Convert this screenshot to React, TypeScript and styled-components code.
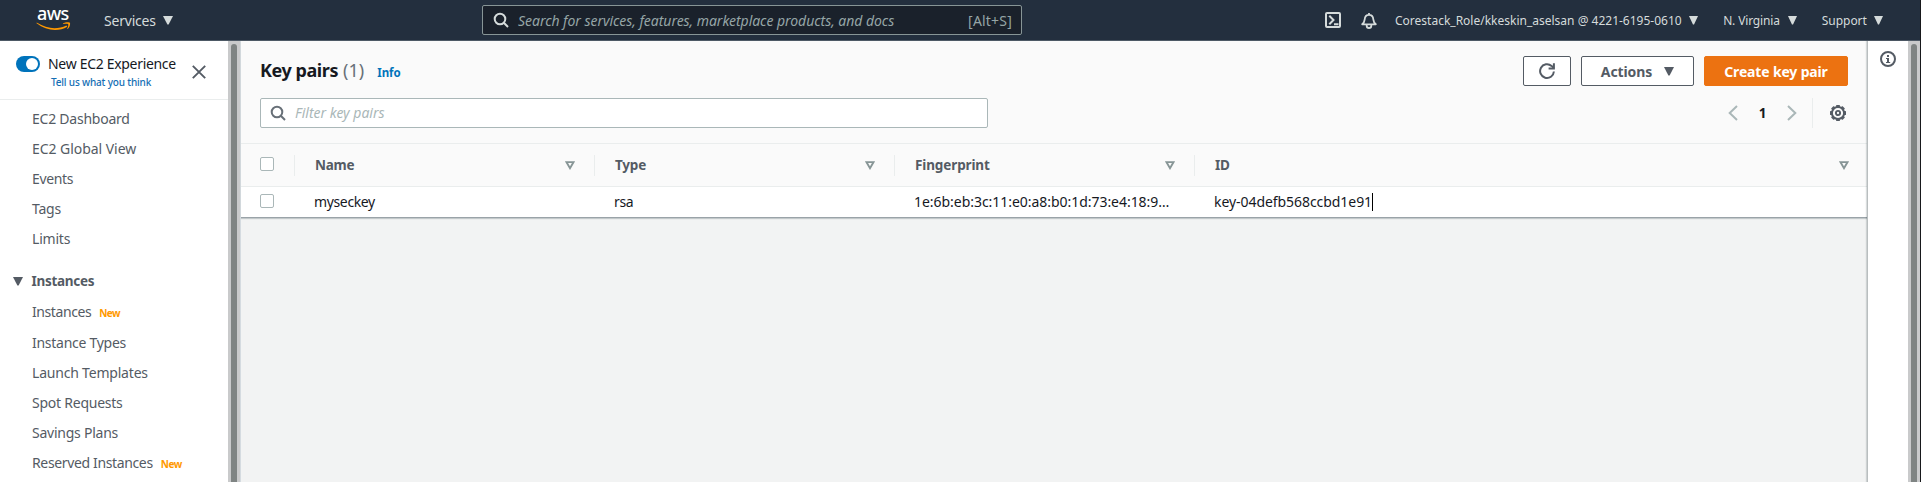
import React from "react";
import styled, { createGlobalStyle } from "styled-components";

const GlobalStyle = createGlobalStyle`
  *, *::before, *::after { box-sizing: border-box; }
  html, body, #root { height: 100%; }
  body {
    margin: 0;
    overflow: hidden;
    background: #f2f3f3;
    font-family: "Noto Sans", "Open Sans", sans-serif;
    font-size: 14px;
    color: #16191f;
  }
`;

const Page = styled.div`
  display: grid;
  grid-template-rows: 41px 1fr;
  height: 482px;
  border-right: 1px solid #17181b;
`;

const Text = styled.span<{ $ls?: number }>`
  letter-spacing: ${(p) => p.$ls ?? 0}px;
  white-space: nowrap;
`;

/* ---------- top navigation ---------- */

const TopBar = styled.header`
  display: flex;
  align-items: center;
  height: 41px;
  background: #232f3e;
  border-bottom: 1px solid #4d5965;
  color: #d5dbdb;
`;

const Logo = styled.div`
  display: flex;
  flex-direction: column;
  width: 36px;
  height: 23px;
  margin: 0 32px 1px 36px;
  color: #fff;
  font-size: 18px;
  font-weight: 500;
  letter-spacing: -0.6px;
`;

const LogoWord = styled.span`
  height: 14px;
  padding-left: 1px;
  line-height: 10px;
`;

const ServicesMenu = styled.div`
  display: flex;
  align-items: center;
  gap: 7px;
  width: 378px;
`;

const GlobalSearch = styled.div`
  display: flex;
  align-items: center;
  width: 540px;
  height: 30px;
  padding: 0 9px 0 10px;
  background: #1a212b;
  border: 1px solid #879596;
  border-radius: 2px;
  color: #95a5a6;
`;

const SearchHint = styled(Text)`
  flex: 1;
  margin-left: 9px;
  font-style: italic;
`;

const AccountMenus = styled.div`
  display: flex;
  align-items: center;
  margin-left: 303px;
  font-size: 12px;
`;

const AccountMenu = styled.div<{ $left: number; $gap?: number }>`
  display: flex;
  align-items: center;
  gap: ${(p) => p.$gap ?? 7}px;
  margin-left: ${(p) => p.$left}px;
  padding-top: 1px;
`;

/* ---------- body layout ---------- */

const Body = styled.div`
  display: grid;
  grid-template-columns: 228px 13px 1fr 41px 12px;
  min-height: 0;
`;

const ScrollTrack = styled.div<{ $edge?: boolean }>`
  padding: 3px 3px 0;
  background: #c9cacb;
  border-right: ${(p) => (p.$edge ? "1px solid #d5dbe0" : "none")};
`;

const ScrollThumb = styled.div`
  width: 6px;
  height: 100%;
  background: #7f8483;
  border-radius: 3px 3px 0 0;
`;

/* ---------- sidebar ---------- */

const Sidebar = styled.nav`
  display: flex;
  flex-direction: column;
  background: #fff;
  color: #545b64;
  overflow: hidden;
`;

const Experience = styled.div`
  display: flex;
  align-items: flex-start;
  height: 59px;
  flex: none;
  padding: 15px 0 0 16px;
  border-bottom: 1px solid #eaeded;
`;

const Toggle = styled.div`
  display: flex;
  justify-content: flex-end;
  width: 24px;
  height: 16px;
  padding: 2px;
  background: #0073bb;
  border-radius: 8px;
`;

const ToggleKnob = styled.div`
  width: 12px;
  height: 12px;
  background: #fff;
  border-radius: 50%;
`;

const ExperienceText = styled.div`
  display: flex;
  flex-direction: column;
  width: 145px;
  padding-left: 8px;
  color: #16191f;
  line-height: 16px;
`;

const FeedbackLink = styled(Text)`
  padding: 2px 0 0 3px;
  color: #146eb4;
  font-size: 10px;
  font-weight: 500;
`;

const CloseIcon = styled.svg`
  margin: 9px 0 0 7px;
`;

const NavList = styled.div`
  padding-top: 4px;
`;

const NavItem = styled.div<{ $tall?: boolean }>`
  display: flex;
  align-items: center;
  height: ${(p) => (p.$tall ? 31 : 30)}px;
  padding: 0 0 2px 32px;
`;

const NavHeading = styled.div`
  display: flex;
  align-items: center;
  gap: 8.500px;
  height: 30px;
  margin: 12px 0 1px;
  padding-left: 13px;
  font-size: 13.5px;
  font-weight: 700;
`;

const NewTag = styled.span`
  margin: 3px 0 0 8px;
  color: #ff9900;
  font-size: 10px;
  font-weight: 700;
  letter-spacing: -0.5px;
`;

/* ---------- key pair panel ---------- */

const Main = styled.main`
  min-width: 0;
  background: #f2f3f3;
`;

const Panel = styled.section`
  background: #fafafa;
  border-bottom: 1px solid #9aa3a8;
  box-shadow: 0 1px 1px 0 #c3c9cb;
`;

const PanelTop = styled.div`
  display: flex;
  align-items: center;
  justify-content: space-between;
  height: 45px;
  padding: 15px 19px 0;
`;

const Title = styled.h1`
  display: flex;
  align-items: baseline;
  margin: 0;
  font-size: 18px;
  line-height: 20px;
`;

const Count = styled(Text)`
  margin-left: 5px;
  color: #687078;
  font-weight: 400;
`;

const InfoLink = styled(Text)`
  margin-left: 13px;
  color: #0073bb;
  font-size: 11.5px;
`;

const ButtonRow = styled.div`
  display: flex;
  gap: 10px;
`;

const Button = styled.button<{ $width: number; $primary?: boolean }>`
  display: flex;
  align-items: center;
  justify-content: center;
  gap: 12px;
  width: ${(p) => p.$width}px;
  height: 30px;
  padding: 0;
  background: ${(p) => (p.$primary ? "#ec7211" : "#fff")};
  border: 1px solid ${(p) => (p.$primary ? "#ec7211" : "#545b64")};
  border-radius: 2px;
  color: ${(p) => (p.$primary ? "#fff" : "#545b64")};
  font: 700 14px "Noto Sans", sans-serif;
`;

const PanelFilter = styled.div`
  display: flex;
  align-items: center;
  justify-content: space-between;
  height: 58px;
  padding: 12px 21px 15px 19px;
  border-bottom: 1px solid #eaeded;
`;

const FilterBox = styled.div`
  display: flex;
  align-items: center;
  gap: 9px;
  width: 728px;
  height: 30px;
  padding: 0 0 1px 9px;
  background: #fff;
  border: 1px solid #aab7b8;
  border-radius: 2px;
  color: #aab7b8;
  font-style: italic;
`;

const Pager = styled.div`
  display: flex;
  align-items: center;
  height: 30px;
`;

const PageNumber = styled.span`
  width: 49px;
  text-align: center;
  font-weight: 700;
  font-size: 13.5px;
`;

const PagerDivider = styled.div`
  width: 1px;
  height: 30px;
  margin: 0 17px 0 15px;
  background: #eaeded;
`;

const Row = styled.div<{ $head?: boolean }>`
  display: grid;
  grid-template-columns: 53px 300px 300px 300px 1fr;
  align-items: center;
  height: ${(p) => (p.$head ? 43 : 30)}px;
  background: ${(p) => (p.$head ? "#fafafa" : "#fff")};
  border-bottom: ${(p) => (p.$head ? "1px solid #eaeded" : "none")};
`;

const CheckCell = styled.div`
  padding: 0 0 2px 19px;
`;

const Checkbox = styled.div`
  width: 14px;
  height: 14px;
  background: #fff;
  border: 1px solid #aab7b8;
  border-radius: 2px;
`;

const HeadCell = styled.div`
  display: flex;
  align-items: center;
  justify-content: space-between;
  height: 21px;
  padding: 0 19px 0 20px;
  border-left: 1px solid #eaeded;
  color: #545b64;
  font-size: 13.5px;
  font-weight: 700;

  &:last-child {
    padding-right: 18px;
  }
`;

const Cell = styled.div`
  display: flex;
  align-items: center;
  padding: 0 0 2px 20px;
`;

const Caret = styled.span`
  width: 1px;
  height: 18px;
  margin-top: 2px;
  background: #000;
`;

const HelpRail = styled.aside`
  display: flex;
  justify-content: center;
  padding-top: 10px;
  background: #fff;
  border-left: 1px solid #b9bebf;
  box-shadow: -1px 0 1px rgba(0, 28, 36, 0.15);
`;

/* ---------- icons ---------- */

const Triangle = ({ w, h = 9 }: { w: number; h?: number }) => (
  <svg width={w} height={h} viewBox="0 0 10 9" preserveAspectRatio="none">
    <path d="M0 0h10L5.6 8.6h-1.2z" fill="currentColor" />
  </svg>
);

const SortIcon = () => (
  <svg width="10" height="9" viewBox="0 0 10 9">
    <path d="M1.4 1.100h7.200L5 7.200z" fill="none" stroke="#879596" strokeWidth="1.900" />
  </svg>
);

const SearchIcon = ({ color }: { color: string }) => (
  <svg width="16" height="16" viewBox="0 0 16 16" fill="none" stroke={color} strokeWidth="2">
    <circle cx="7" cy="7" r="5.300" />
    <path d="M10.800 10.800l4.200 4.200" />
  </svg>
);

const Smile = () => (
  <svg width="35" height="9" viewBox="0 0 35 9">
    <path d="M.6 1.300C10.500 9 22.500 9.800 31.300 4.700l-.9-1.200C21.500 7.600 11 7.100 1.100.8c-.6-.3-.9.1-.5.5z" fill="#ff9900" />
    <path d="M27 1.400C29 0 33.300-.1 33.900.7c.6.8-.1 4.400-2.100 6.200-.4.3-.7.1-.5-.3.6-1.300 1.300-3.700.9-4.400-.5-.6-3-.4-4.700-.2-.6.1-.8-.3-.5-.6z" fill="#ff9900" />
  </svg>
);

const ShellIcon = () => (
  <svg width="16" height="16" viewBox="0 0 16 16" fill="none" stroke="#d5dbdb" strokeWidth="2">
    <rect x="1" y="1" width="14" height="14" rx="1" />
    <path d="M4.300 3.700L8.500 8l-4.200 4.300M9 12.200h4.500" />
  </svg>
);

const BellIcon = () => (
  <svg width="16" height="16" viewBox="0 0 16 16" fill="none" stroke="#d5dbdb" strokeWidth="1.800" strokeLinejoin="round">
    <path d="M8 0v2M1.200 11.300c2-1.600 2.300-3.200 2.500-5 .2-2.600 1.800-4.400 4.300-4.400s4.100 1.800 4.300 4.400c.2 1.800.5 3.400 2.500 5z" />
    <path d="M5.700 11.500v1.200a2.300 2.300 0 0 0 4.600 0v-1.200" />
  </svg>
);

const RefreshIcon = () => (
  <svg width="16" height="16" viewBox="0 0 16 16" fill="none" stroke="#545b64" strokeWidth="2">
    <path d="M14.900 8.500A6.900 6.900 0 1 1 12.600 2.900L14.800 5" />
    <path d="M14.900.3v5.100H9.600" />
  </svg>
);

const ChevronIcon = ({ flip }: { flip?: boolean }) => (
  <svg width="10" height="16" viewBox="0 0 10 16" fill="none" stroke="#aab7b8" strokeWidth="2">
    <path d={flip ? "M1 1l7.300 7L1 15" : "M9 1L1.700 8 9 15"} />
  </svg>
);

const GearIcon = () => {
  const teeth = Array.from({ length: 8 }, (_, i) => i * 45);
  return (
    <svg width="16" height="16" viewBox="0 0 16 16">
      <circle cx="8" cy="8" r="6.100" fill="none" stroke="#545b64" strokeWidth="2" />
      {teeth.map((a) => (
        <rect key={a} x="6.100" y="0" width="3.800" height="2.400" rx=".5" fill="#545b64" transform={`rotate(${a} 8 8)`} />
      ))}
      <circle cx="8" cy="8" r="2.100" fill="none" stroke="#545b64" strokeWidth="1.900" />
    </svg>
  );
};

const InfoIcon = () => (
  <svg width="16" height="16" viewBox="0 0 16 16">
    <circle cx="8" cy="8" r="7" fill="none" stroke="#545b64" strokeWidth="2" />
    <path d="M7 4h2v2H7zM6 7h3v4h1.200v1H6v-1h1V8H6z" fill="#545b64" />
  </svg>
);

/* ---------- content ---------- */

const overview: [string, number][] = [
  ["EC2 Dashboard", -0.24],
  ["EC2 Global View", -0.05],
  ["Events", -0.35],
  ["Tags", -0.2],
  ["Limits", -0.2],
];

const instanceLinks: { label: string; ls: number; isNew?: boolean; tall?: boolean }[] = [
  { label: "Instances", ls: -0.42, isNew: true, tall: true },
  { label: "Instance Types", ls: -0.27 },
  { label: "Launch Templates", ls: -0.2 },
  { label: "Spot Requests", ls: -0.24 },
  { label: "Savings Plans", ls: -0.24 },
  { label: "Reserved Instances", ls: -0.36, isNew: true },
];

const columns: [string, number][] = [
  ["Name", -0.25],
  ["Type", -0.2],
  ["Fingerprint", -0.12],
  ["ID", -0.2],
];

export default function App() {
  return (
    <>
      <GlobalStyle />
      <Page>
        <TopBar>
          <Logo>
            <LogoWord>aws</LogoWord>
            <Smile />
          </Logo>
          <ServicesMenu>
            <Text $ls={-0.2}>Services</Text>
            <Triangle w={10} />
          </ServicesMenu>
          <GlobalSearch>
            <SearchIcon color="#d5dbdb" />
            <SearchHint $ls={-0.04}>Search for services, features, marketplace products, and docs</SearchHint>
            <Text $ls={0.2}>[Alt+S]</Text>
          </GlobalSearch>
          <AccountMenus>
            <ShellIcon />
            <AccountMenu $left={20}>
              <BellIcon />
            </AccountMenu>
            <AccountMenu $left={18}>
              <Text>Corestack_Role/kkeskin_aselsan @ 4221-6195-0610</Text>
              <Triangle w={9} />
            </AccountMenu>
            <AccountMenu $left={25.5} $gap={8}>
              <Text $ls={-0.15}>N. Virginia</Text>
              <Triangle w={9} />
            </AccountMenu>
            <AccountMenu $left={25}>
              <Text $ls={-0.05}>Support</Text>
              <Triangle w={9} />
            </AccountMenu>
          </AccountMenus>
        </TopBar>
        <Body>
          <Sidebar>
            <Experience>
              <Toggle>
                <ToggleKnob />
              </Toggle>
              <ExperienceText>
                <Text $ls={-0.31}>New EC2 Experience</Text>
                <FeedbackLink $ls={-0.17}>Tell us what you think</FeedbackLink>
              </ExperienceText>
              <CloseIcon width="14" height="14" viewBox="0 0 14 14" stroke="#545b64" strokeWidth="1.900">
                <path d="M.8.8l12.400 12.400M13.200.8L.8 13.200" />
              </CloseIcon>
            </Experience>
            <NavList>
              {overview.map(([label, ls]) => (
                <NavItem key={label}>
                  <Text $ls={ls}>{label}</Text>
                </NavItem>
              ))}
              <NavHeading>
                <Triangle w={10} />
                <Text $ls={-0.3}>Instances</Text>
              </NavHeading>
              {instanceLinks.map((link) => (
                <NavItem key={link.label} $tall={link.tall}>
                  <Text $ls={link.ls}>{link.label}</Text>
                  {link.isNew && <NewTag>New</NewTag>}
                </NavItem>
              ))}
            </NavList>
          </Sidebar>
          <ScrollTrack $edge>
            <ScrollThumb />
          </ScrollTrack>
          <Main>
            <Panel>
              <PanelTop>
                <Title>
                  <Text $ls={-0.43}>Key pairs</Text>
                  <Count>(1)</Count>
                  <InfoLink>Info</InfoLink>
                </Title>
                <ButtonRow>
                  <Button $width={48} aria-label="Refresh">
                    <RefreshIcon />
                  </Button>
                  <Button $width={113}>
                    <Text $ls={-0.1}>Actions</Text>
                    <Triangle w={10} />
                  </Button>
                  <Button $width={144} $primary>
                    <Text $ls={-0.16}>Create key pair</Text>
                  </Button>
                </ButtonRow>
              </PanelTop>
              <PanelFilter>
                <FilterBox>
                  <SearchIcon color="#687078" />
                  <Text>Filter key pairs</Text>
                </FilterBox>
                <Pager>
                  <ChevronIcon />
                  <PageNumber>1</PageNumber>
                  <ChevronIcon flip />
                  <PagerDivider />
                  <GearIcon />
                </Pager>
              </PanelFilter>
              <Row $head>
                <CheckCell>
                  <Checkbox />
                </CheckCell>
                {columns.map(([label, ls]) => (
                  <HeadCell key={label}>
                    <Text $ls={ls}>{label}</Text>
                    <SortIcon />
                  </HeadCell>
                ))}
              </Row>
              <Row>
                <CheckCell>
                  <Checkbox />
                </CheckCell>
                <Cell>
                  <Text $ls={-0.36}>myseckey</Text>
                </Cell>
                <Cell>
                  <Text $ls={-0.4}>rsa</Text>
                </Cell>
                <Cell>
                  <Text $ls={-0.04}>1e:6b:eb:3c:11:e0:a8:b0:1d:73:e4:18:9…</Text>
                </Cell>
                <Cell>
                  <Text $ls={-0.06}>key-04defb568ccbd1e91</Text>
                  <Caret />
                </Cell>
              </Row>
            </Panel>
          </Main>
          <HelpRail>
            <InfoIcon />
          </HelpRail>
          <ScrollTrack>
            <ScrollThumb />
          </ScrollTrack>
        </Body>
      </Page>
    </>
  );
}
